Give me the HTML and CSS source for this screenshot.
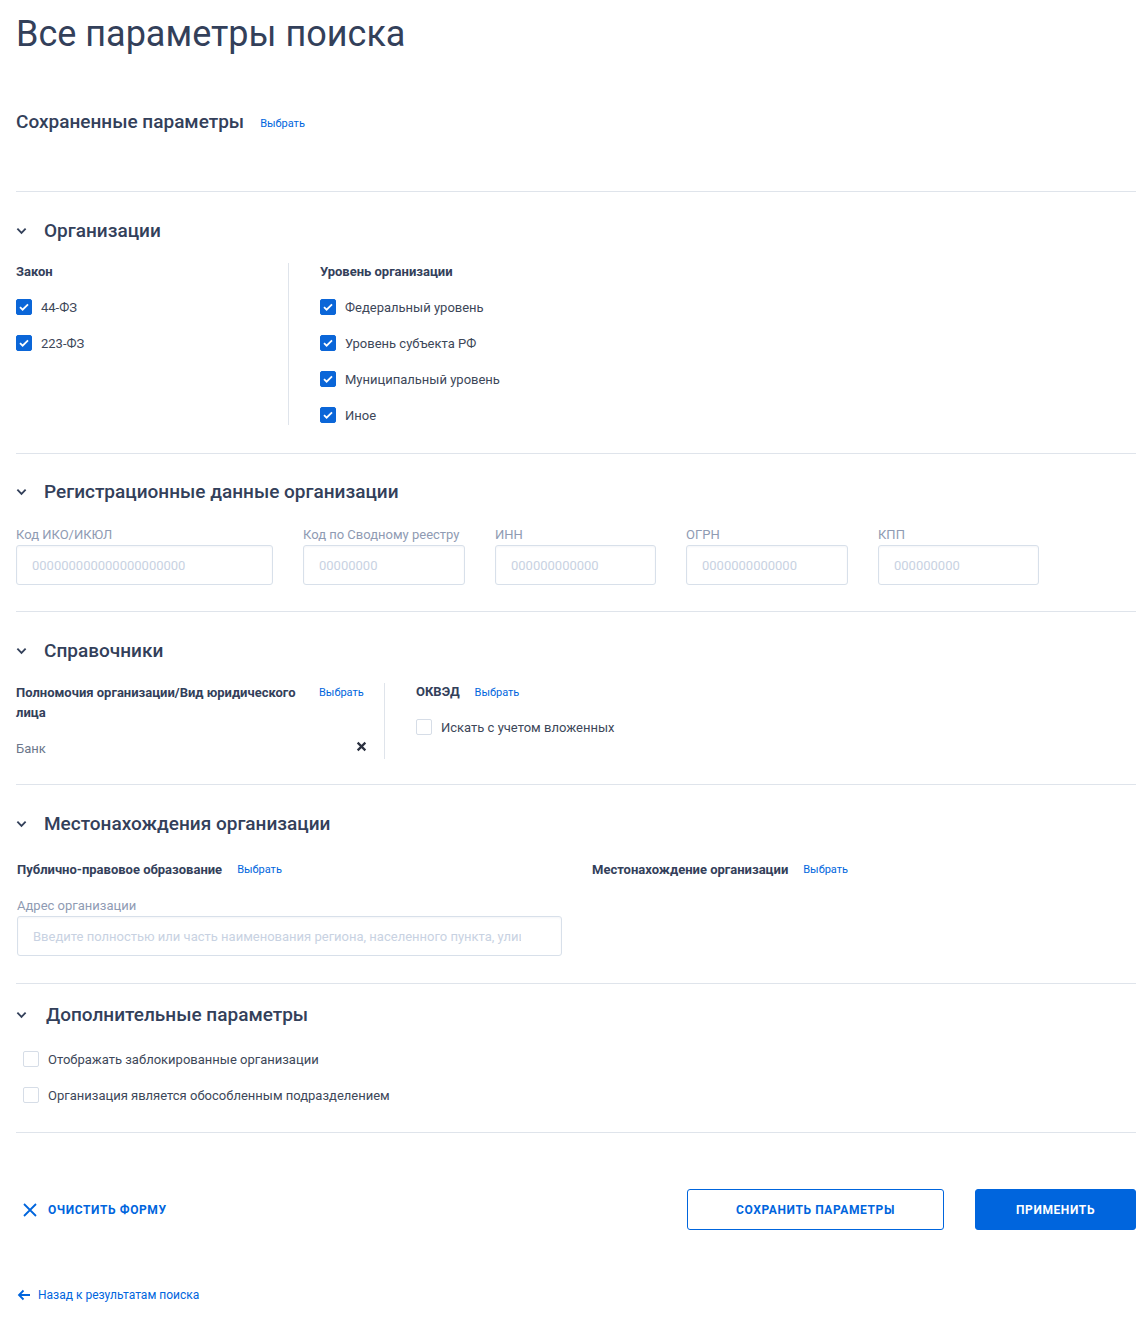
FILE: index.html
```html
<!DOCTYPE html>
<html lang="ru">
<head>
  <meta charset="UTF-8">
  <meta name="viewport" content="width=device-width, initial-scale=1.0">
  <title>Все параметры поиска</title>
  <link rel="stylesheet" href="styles.css">
</head>
<body>
  <div class="page">
    <h1 class="page-title">Все параметры поиска</h1>

    <div class="saved">
      <h2 class="saved-title">Сохраненные параметры</h2>
      <a class="link-small" href="#">Выбрать</a>
    </div>

    <!-- Организации -->
    <section class="section section-org">
      <div class="section-head">
        <svg class="chevron" viewBox="0 0 12 8"><path d="M1.5 1.5 6 6l4.5-4.5" /></svg>
        <h3>Организации</h3>
      </div>
      <div class="cols">
        <div class="col col-law">
          <div class="field-title">Закон</div>
          <div class="checks">
            <label class="check"><span class="box checked"></span>44-ФЗ</label>
            <label class="check"><span class="box checked"></span>223-ФЗ</label>
          </div>
        </div>
        <div class="col">
          <div class="field-title">Уровень организации</div>
          <div class="checks">
            <label class="check"><span class="box checked"></span>Федеральный уровень</label>
            <label class="check"><span class="box checked"></span>Уровень субъекта РФ</label>
            <label class="check"><span class="box checked"></span>Муниципальный уровень</label>
            <label class="check"><span class="box checked"></span>Иное</label>
          </div>
        </div>
      </div>
    </section>

    <!-- Регистрационные данные -->
    <section class="section section-reg">
      <div class="section-head">
        <svg class="chevron" viewBox="0 0 12 8"><path d="M1.5 1.5 6 6l4.5-4.5" /></svg>
        <h3>Регистрационные данные организации</h3>
      </div>
      <div class="reg-grid">
        <div class="input-field">
          <div class="input-label">Код ИКО/ИКЮЛ</div>
          <input class="input" type="text" placeholder="000000000000000000000">
        </div>
        <div class="input-field">
          <div class="input-label">Код по Сводному реестру</div>
          <input class="input" type="text" placeholder="00000000">
        </div>
        <div class="input-field">
          <div class="input-label">ИНН</div>
          <input class="input" type="text" placeholder="000000000000">
        </div>
        <div class="input-field">
          <div class="input-label">ОГРН</div>
          <input class="input" type="text" placeholder="0000000000000">
        </div>
        <div class="input-field">
          <div class="input-label">КПП</div>
          <input class="input" type="text" placeholder="000000000">
        </div>
      </div>
    </section>

    <!-- Справочники -->
    <section class="section section-dict">
      <div class="section-head">
        <svg class="chevron" viewBox="0 0 12 8"><path d="M1.5 1.5 6 6l4.5-4.5" /></svg>
        <h3>Справочники</h3>
      </div>
      <div class="cols">
        <div class="col col-power">
          <div class="field-row">
            <div class="field-title wrap">Полномочия организации/Вид юридического лица</div>
            <a class="link-small" href="#">Выбрать</a>
          </div>
          <div class="chosen">
            <span>Банк</span>
            <svg class="remove" viewBox="0 0 10 10"><path d="M1.5 1.5l7 7M8.5 1.5l-7 7" /></svg>
          </div>
        </div>
        <div class="col">
          <div class="field-row">
            <div class="field-title">ОКВЭД</div>
            <a class="link-small" href="#">Выбрать</a>
          </div>
          <div class="checks single">
            <label class="check"><span class="box"></span>Искать с учетом вложенных</label>
          </div>
        </div>
      </div>
    </section>

    <!-- Местонахождения -->
    <section class="section section-loc">
      <div class="section-head">
        <svg class="chevron" viewBox="0 0 12 8"><path d="M1.5 1.5 6 6l4.5-4.5" /></svg>
        <h3>Местонахождения организации</h3>
      </div>
      <div class="loc-grid">
        <div class="loc-col">
          <div class="field-row">
            <div class="field-title">Публично-правовое образование</div>
            <a class="link-small" href="#">Выбрать</a>
          </div>
          <div class="input-field address">
            <div class="input-label">Адрес организации</div>
            <input class="input input-wide" type="text" placeholder="Введите полностью или часть наименования региона, населенного пункта, улицы">
          </div>
        </div>
        <div class="loc-col">
          <div class="field-row">
            <div class="field-title">Местонахождение организации</div>
            <a class="link-small" href="#">Выбрать</a>
          </div>
        </div>
      </div>
    </section>

    <!-- Дополнительные параметры -->
    <section class="section section-extra">
      <div class="section-head">
        <svg class="chevron" viewBox="0 0 12 8"><path d="M1.5 1.5 6 6l4.5-4.5" /></svg>
        <h3>Дополнительные параметры</h3>
      </div>
      <div class="checks extra">
        <label class="check"><span class="box"></span>Отображать заблокированные организации</label>
        <label class="check"><span class="box"></span>Организация является обособленным подразделением</label>
      </div>
    </section>

    <div class="actions">
      <button class="btn-clear" type="button">
        <svg viewBox="0 0 16 16"><path d="M2 2l12 12M14 2L2 14" /></svg>
        Очистить форму
      </button>
      <div class="actions-right">
        <button class="btn btn-outline" type="button">Сохранить параметры</button>
        <button class="btn btn-primary" type="button">Применить</button>
      </div>
    </div>

    <a class="back" href="#">
      <svg viewBox="0 0 14 12"><path d="M13 6H2M6.5 1.5 2 6l4.5 4.5" /></svg>
      Назад к результатам поиска
    </a>
  </div>
</body>
</html>
```

FILE: styles.css
```css
:root {
  --text: #33405a;
  --text-soft: #3d4759;
  --muted: #8f9bb3;
  --placeholder: #c8d2e2;
  --line: #dfe4eb;
  --blue: #0065dd;
}

* {
  box-sizing: border-box;
}

body {
  margin: 0;
  font-family: Roboto, "Noto Sans", Arial, sans-serif;
  color: var(--text);
  background: #fff;
}

a {
  text-decoration: none;
}

.page {
  padding: 12px 12px 24px 16px;
}

.page-title {
  margin: 0;
  font-size: 36px;
  line-height: 44px;
  font-weight: 400;
  color: var(--text);
}

.saved {
  display: flex;
  align-items: center;
  gap: 16px;
  margin-top: 54px;
  padding-bottom: 57px;
  border-bottom: 1px solid var(--line);
}

.saved-title {
  margin: 0;
  font-size: 19px;
  line-height: 24px;
  font-weight: 500;
}

.link-small {
  font-size: 11px;
  line-height: 14px;
  color: var(--blue);
  padding-top: 3px;
}

/* sections */
.section {
  padding: 27px 0 26px;
  border-bottom: 1px solid var(--line);
}

.section-head {
  display: flex;
  align-items: center;
  gap: 17px;
}

.section-head h3 {
  margin: 0;
  font-size: 19px;
  line-height: 24px;
  font-weight: 500;
}

.chevron {
  width: 11px;
  height: 8px;
  fill: none;
  stroke: var(--text);
  stroke-width: 2;
}

.section-org {
  padding-bottom: 28px;
}

.section-reg {
  padding-top: 26px;
}

.section-dict {
  padding: 27px 0 25px;
}

.section-loc {
  padding: 27px 0 27px;
}

.section-extra {
  padding: 19px 0 27px;
}

.section-extra .section-head {
  gap: 19px;
  margin-bottom: 22px;
}

.field-title {
  font-size: 13px;
  line-height: 18px;
  font-weight: 700;
  color: var(--text);
}

.field-title.wrap {
  width: 288px;
  line-height: 20px;
}

.field-row {
  display: flex;
  align-items: flex-start;
  gap: 15px;
}

.field-row .link-small {
  padding-top: 3px;
}

/* two columns with divider */
.cols {
  display: flex;
  margin-top: 20px;
}

.col {
  padding-left: 31px;
}

.col-law {
  width: 273px;
  padding: 0 16px 0 0;
  border-right: 1px solid var(--line);
}

.col-power {
  width: 369px;
  padding: 0 17px 0 0;
  border-right: 1px solid var(--line);
}

.checks {
  display: flex;
  flex-direction: column;
  gap: 16px;
  margin-top: 16px;
}

.checks.single {
  margin-top: 16px;
}

.checks.extra {
  margin-top: 0;
  padding-left: 7px;
}

.check {
  display: flex;
  align-items: center;
  gap: 9px;
  height: 20px;
  font-size: 13px;
  color: var(--text-soft);
}

.box {
  width: 16px;
  height: 16px;
  border: 1px solid #d6dde7;
  border-radius: 2px;
  background: #fff;
  flex-shrink: 0;
}

.box.checked {
  border-color: #0b66d8;
  background: #0b66d8 url("data:image/svg+xml,%3Csvg xmlns='http://www.w3.org/2000/svg' viewBox='0 0 16 16'%3E%3Cpath d='M4 8.2l2.6 2.5L12 5.3' fill='none' stroke='white' stroke-width='1.8'/%3E%3C/svg%3E") center / 16px 16px no-repeat;
}

.chosen {
  display: flex;
  align-items: center;
  justify-content: space-between;
  margin-top: 16px;
  font-size: 13px;
  line-height: 20px;
  color: #6c778b;
}

.remove {
  width: 11px;
  height: 11px;
  margin-top: -5px;
  fill: none;
  stroke: #2b3140;
  stroke-width: 2;
}

/* registration inputs */
.reg-grid {
  display: grid;
  grid-template-columns: 257px 162px 161px 162px 161px;
  gap: 30px;
  margin-top: 22px;
}

.input-label {
  font-size: 13px;
  line-height: 18px;
  color: var(--muted);
  margin-bottom: 1px;
  white-space: nowrap;
}

.input {
  display: block;
  width: 100%;
  height: 40px;
  padding: 0 15px;
  border: 1px solid #d8e0ea;
  border-radius: 3px;
  font-family: inherit;
  font-size: 13px;
  color: var(--text);
  background: #fff;
  box-shadow: inset 0 1px 2px rgba(30, 60, 110, 0.05);
}

.input-wide {
  padding-right: 40px;
}

.input::placeholder {
  color: var(--placeholder);
}

/* location */
.loc-grid {
  display: grid;
  grid-template-columns: 545px 1fr;
  gap: 30px;
  margin-top: 24px;
  padding-left: 1px;
}

.loc-grid .field-title {
  line-height: 20px;
}

.address {
  margin-top: 17px;
}

/* bottom actions */
.actions {
  display: flex;
  align-items: center;
  justify-content: space-between;
  margin-top: 56px;
}

.btn-clear {
  display: flex;
  align-items: center;
  gap: 10px;
  padding: 0 0 0 6px;
  border: 0;
  background: none;
  font-family: inherit;
  font-size: 12px;
  font-weight: 700;
  letter-spacing: 0.6px;
  text-transform: uppercase;
  color: var(--blue);
  cursor: pointer;
}

.btn-clear svg {
  width: 16px;
  height: 16px;
  fill: none;
  stroke: var(--blue);
  stroke-width: 1.8;
}

.actions-right {
  display: flex;
  gap: 31px;
}

.btn {
  height: 41px;
  border-radius: 3px;
  font-family: inherit;
  font-size: 12px;
  font-weight: 700;
  letter-spacing: 0.6px;
  text-transform: uppercase;
  cursor: pointer;
}

.btn-outline {
  width: 257px;
  border: 1px solid var(--blue);
  background: #fff;
  color: var(--blue);
}

.btn-primary {
  width: 161px;
  border: 1px solid var(--blue);
  background: var(--blue);
  color: #fff;
}

.back {
  display: inline-flex;
  align-items: center;
  gap: 7px;
  margin-top: 57px;
  padding-left: 1px;
  font-size: 12px;
  line-height: 16px;
  color: var(--blue);
}

.back svg {
  width: 14px;
  height: 12px;
  fill: none;
  stroke: var(--blue);
  stroke-width: 1.8;
}
```
